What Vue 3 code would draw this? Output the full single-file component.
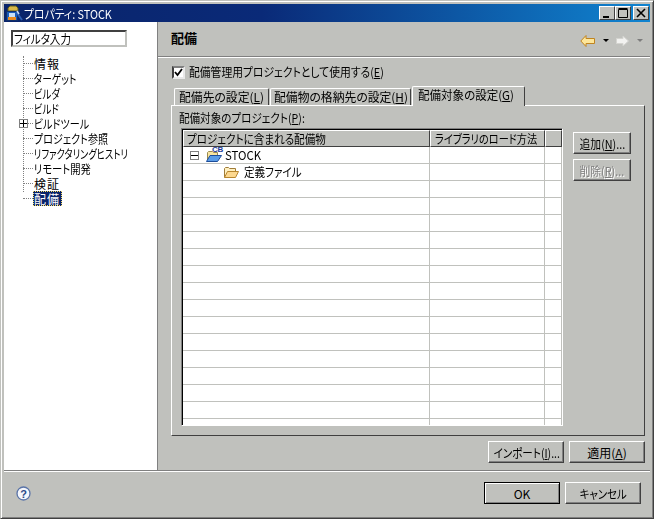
<script setup>
const navItems = [
  { label: '情報', cls: 'kanji' },
  { label: 'ターゲット', cls: 'kana', sx: 0.81 },
  { label: 'ビルダ', cls: 'kana', sx: 0.79 },
  { label: 'ビルド', cls: 'kana', sx: 0.79 },
  { label: 'ビルドツール', cls: 'kana', sx: 0.84, plus: true },
  { label: 'プロジェクト参照', cls: 'kana', sx: 0.84 },
  { label: 'リファクタリングヒストリ', cls: 'kana', sx: 0.77 },
  { label: 'リモート開発', cls: 'kana', sx: 0.86 },
  { label: '検証', cls: 'kanji' },
  { label: '配備', cls: 'kanji', selected: true }
]
const tabs = [
  { label: '配備先の設定(', key: 'L' },
  { label: '配備物の格納先の設定(', key: 'H' },
  { label: '配備対象の設定(', key: 'G', active: true }
]
const emptyRows = Array.from({ length: 15 }, (_, i) => i)
</script>

<template>
  <div class="window">
    <div class="titlebar">
      <svg class="app-icon" width="18" height="17" viewBox="0 0 18 17">
        <path d="M3 6V3l2-2h6l2 2v3z" fill="#d8b848" stroke="#5c5a20" />
        <rect x="1.500" y="6.500" width="11" height="9" fill="#1c5cb8" stroke="#10306c" />
        <rect x="4" y="8" width="6" height="4" fill="#c8e0f8" />
        <rect x="3" y="12" width="8" height="3" fill="#e88a20" />
        <path d="M12 8l5 7" stroke="#2c5cb0" stroke-width="2" />
        <path d="M12 6l2 3" stroke="#c8d8f0" stroke-width="1.500" />
      </svg>
      <span class="title-text">プロパティ: STOCK</span>
      <div class="win-buttons">
        <button class="win-btn"><svg width="10" height="10" viewBox="0 0 10 10"><rect x="1" y="8" width="6" height="2" fill="#000" /></svg></button>
        <button class="win-btn"><svg width="10" height="10" viewBox="0 0 10 10"><path d="M0.500 1.500h9v8h-9zM0.500 0.500h9" fill="none" stroke="#000" /></svg></button>
        <button class="win-btn close"><svg width="10" height="10" viewBox="0 0 10 10"><path d="M1 1l8 8M9 1l-8 8" stroke="#000" stroke-width="1.600" /></svg></button>
      </div>
    </div>

    <div class="main">
      <aside class="sidebar">
        <div class="filter"><span class="sx sx88">フィルタ入力</span></div>
        <ul class="tree">
          <li v-for="item in navItems" :key="item.label" class="tree-row">
            <span class="stub"></span>
            <span v-if="item.plus" class="plus"><svg width="7" height="7" viewBox="0 0 7 7"><path d="M0 3.500h7M3.500 0v7" stroke="#000" /></svg></span>
            <span class="tree-label" :class="[item.cls, { selected: item.selected }]" :style="item.sx ? { transform: `scaleX(${item.sx})` } : null">{{ item.label }}</span>
          </li>
        </ul>
      </aside>

      <section class="content">
        <header class="page-head">
          <h1>配備</h1>
          <div class="nav-arrows">
            <svg width="15" height="12" viewBox="0 0 15 12"><path d="M6 .500L.800 6 6 11.500V8.500h8.500v-5H6z" fill="#fde69a" stroke="#c08420" /></svg>
            <svg class="drop" width="6" height="3" viewBox="0 0 6 3"><path d="M0 0h6L3 3z" fill="#000" /></svg>
            <svg class="fwd" width="13" height="12" viewBox="0 0 13 12"><path d="M7 1l5.500 5L7 11V8.500H.500v-5H7z" fill="#f2f2f0" stroke="#d4d4d0" /></svg>
            <svg class="drop2" width="6" height="3" viewBox="0 0 6 3"><path d="M0 0h6L3 3z" fill="#7c7c7c" /></svg>
          </div>
        </header>

        <div class="body">
          <label class="check-row">
            <span class="checkbox"><svg width="9" height="9" viewBox="0 0 9 9"><path d="M1 4l2.500 3L8 1" fill="none" stroke="#000" stroke-width="1.800" /></svg></span>
            <span class="check-text sx sx90">配備管理用プロジェクトとして使用する(<u>E</u>)</span>
          </label>

          <div class="tabs">
            <div v-for="t in tabs" :key="t.key" class="tab" :class="{ active: t.active }"><span class="sx" :class="t.active ? 'sx96' : 'sx98'">{{ t.label }}<u>{{ t.key }}</u>)</span></div>
          </div>

          <div class="panel">
            <div class="panel-label"><span class="sx sx88">配備対象のプロジェクト(<u>P</u>):</span></div>
            <div class="panel-row">
              <div class="table">
                <div class="thead">
                  <div class="th c1"><span class="sx sx88">プロジェクトに含まれる配備物</span></div>
                  <div class="th c2"><span class="sx sx85">ライブラリのロード方法</span></div>
                  <div class="th c3"></div>
                </div>
                <div class="tr">
                  <div class="td c1 first">
                    <span class="minus"><svg width="7" height="7" viewBox="0 0 7 7"><path d="M0 3.500h7" stroke="#000" /></svg></span>
                    <span class="project-icon">
                      <svg width="16" height="12" viewBox="0 0 16 12"><path d="M1.500 10V2.500l1-1h4l1 1h4v3" fill="#f8e4a0" stroke="#9a8a50" /><path d="M.500 11.500l3.500-6h11.500l-4 6z" fill="#5a9ce8" stroke="#1c4c98" /></svg>
                      <span class="cb">CB</span>
                    </span>
                    <span class="row-text stock sx sx95">STOCK</span>
                  </div>
                  <div class="td c2"></div><div class="td c3"></div>
                </div>
                <div class="tr">
                  <div class="td c1 second">
                    <svg width="15" height="11" viewBox="0 0 15 11"><path d="M.500 10.500V1.500l1-1h3l1 1h6v3" fill="#fff0c0" stroke="#a07c38" /><path d="M.500 10.500l3-6h11l-3 6z" fill="#fcd890" stroke="#b8862e" /></svg>
                    <span class="row-text def sx sx88">定義ファイル</span>
                  </div>
                  <div class="td c2"></div><div class="td c3"></div>
                </div>
                <div v-for="r in emptyRows" :key="r" class="tr">
                  <div class="td c1"></div><div class="td c2"></div><div class="td c3"></div>
                </div>
              </div>
              <div class="side-buttons">
                <button class="btn small"><span class="sx sxc sx90">追加(<u>N</u>)...</span></button>
                <button class="btn small disabled"><span class="sx sxc sx90">削除(<u>R</u>)...</span></button>
              </div>
            </div>
          </div>

          <div class="action-row">
            <button class="btn import"><span class="sx sxc sx88">インポート(<u>I</u>)...</span></button>
            <button class="btn apply">適用(<u>A</u>)</button>
          </div>
        </div>
      </section>
    </div>

    <footer class="footer">
      <svg class="help" width="15" height="15" viewBox="0 0 15 15">
        <circle cx="7.500" cy="7.500" r="6.500" fill="#f4f6fc" stroke="#5a74a8" stroke-width="1.300" />
        <text x="7.500" y="11.500" text-anchor="middle" font-size="11" font-weight="700" font-family="Liberation Sans, sans-serif" fill="#2a4a88">?</text>
      </svg>
      <div class="footer-buttons">
        <button class="btn ok">OK</button>
        <button class="btn cancel"><span class="sx sxc sx87">キャンセル</span></button>
      </div>
    </footer>
  </div>
</template>

<style scoped>
.window {
  width: 654px;
  height: 519px;
  box-sizing: border-box;
  display: flex;
  flex-direction: column;
  background: #c0c1bd;
  border-top: 1px solid #c0c1bd;
  border-left: 1px solid #c0c1bd;
  border-right: 1px solid #404040;
  border-bottom: 1px solid #404040;
  padding: 3px 3px 0 3px;
  box-shadow: inset 1px 1px 0 #fff, inset -1px -1px 0 #808080;
  font-family: "Noto Sans CJK JP", "Liberation Sans", sans-serif;
  font-size: 12px;
  font-feature-settings: "palt";
  color: #000;
  overflow: hidden;
}
u { text-underline-offset: 1px; }
.sx { display: inline-block; transform-origin: left center; white-space: nowrap; }
.sxc { transform-origin: center center; }
.sx85 { transform: scaleX(0.85); }
.sx87 { transform: scaleX(0.87); }
.sx88 { transform: scaleX(0.88); }
.sx90 { transform: scaleX(0.9); }
.sx95 { transform: scaleX(0.95); }
.sx96 { transform: scaleX(0.96); }
.sx98 { transform: scaleX(0.985); }
.titlebar {
  height: 18px;
  flex: none;
  display: flex;
  align-items: center;
  background: linear-gradient(90deg, #0a246a 0%, #0a2a78 40%, #1084d0 100%);
  color: #fff;
}
.app-icon { margin-left: 1px; flex: none; }
.title-text { margin-left: 1px; font-size: 12px; transform: scaleX(0.9); transform-origin: left center; }
.win-buttons { margin-left: auto; display: flex; margin-right: 1px; }
.win-btn {
  width: 16px;
  height: 14px;
  padding: 0;
  display: flex;
  align-items: center;
  justify-content: center;
  background: #c0c1bd;
  border: 1px solid;
  border-color: #fff #404040 #404040 #fff;
}
.win-btn.close { margin-left: 2px; }
.main { flex: 1; min-height: 0; display: flex; }
.sidebar {
  flex: none;
  background: #fff;
  border-right: 1px solid #808080;
  padding: 8px 0 0 7px;
  width: 146px;
}
.filter {
  width: 111px;
  height: 13px;
  line-height: 13px;
  border: 2px solid;
  border-color: #404040 #c0c1bd #c0c1bd #404040;
  padding-left: 1px;
  font-size: 12px;
  white-space: nowrap;
  overflow: hidden;
}
.tree {
  list-style: none;
  margin: 9px 0 0;
  padding: 0;
  position: relative;
}
.tree::before {
  content: "";
  position: absolute;
  left: 12px;
  top: 0;
  height: 136px;
  border-left: 1px dotted #808080;
}
.tree-row {
  height: 15px;
  display: flex;
  align-items: center;
  position: relative;
  padding-left: 12px;
  white-space: nowrap;
}
.stub { width: 10px; border-top: 1px dotted #808080; flex: none; }
.plus {
  position: absolute;
  left: 8px;
  top: 3px;
  width: 7px;
  height: 7px;
  background: #fff;
  border: 1px solid #808080;
  display: flex;
}
.tree-label { padding: 0 1px; line-height: 15px; font-size: 12px; transform-origin: left center; }
.tree-label.kanji { letter-spacing: 1px; }
.tree-label.selected {
  background: #0a246a;
  color: #fff;
  outline: 1px dotted #ffe060;
  outline-offset: -1px;
  padding: 0 2px 0 1px;
}
.content { flex: 1; min-width: 0; display: flex; flex-direction: column; }
.page-head {
  height: 35px;
  flex: none;
  box-sizing: border-box;
  display: flex;
  align-items: center;
  padding: 0 7px 4px 13px;
  border-bottom: 1px solid #808080;
  box-shadow: 0 1px 0 #fff;
}
.page-head h1 { margin: 0; font-size: 13px; font-weight: 700; }
.nav-arrows { margin-left: auto; display: flex; align-items: center; margin-top: 7px; }
.drop { margin-left: 8px; }
.fwd { margin-left: 7px; }
.drop2 { margin-left: 8px; }
.body { padding: 7px 5px 0 13px; flex: 1; display: flex; flex-direction: column; }
.check-row { display: flex; align-items: center; height: 16px; margin-left: 1px; }
.checkbox {
  width: 9px;
  height: 9px;
  border: 2px solid;
  border-color: #808080 #e8e8e8 #e8e8e8 #404040;
  background: #fff;
  display: flex;
  flex: none;
}
.check-text { margin-left: 4px; line-height: 16px; }
.tabs { display: flex; align-items: flex-end; height: 21px; margin-top: 4px; padding-left: 3px; position: relative; z-index: 1; }
.tab {
  height: 16px;
  line-height: 16px;
  padding: 0 3px;
  border: 1px solid;
  border-color: #fff #404040 transparent #fff;
  border-bottom: 0;
  border-radius: 2px 2px 0 0;
  margin-right: 1px;
  white-space: nowrap;
  font-size: 12px;
}
.tab:nth-child(1) { width: 86px; padding-left: 4px; }
.tab:nth-child(2) { width: 133px; }
.tab.active {
  height: 19px;
  width: 103px;
  margin-bottom: -1px;
  background: #c0c1bd;
  padding-left: 5px;
}
.panel {
  height: 331px;
  box-sizing: border-box;
  border: 1px solid;
  border-color: #fff #404040 #404040 #fff;
  padding: 3px 8px 0 7px;
}
.panel-label { height: 19px; line-height: 18px; }
.panel-row { display: flex; padding-left: 2px; }
.table {
  width: 382px;
  height: 298px;
  flex: none;
  box-sizing: border-box;
  border: 1px solid;
  border-color: #808080 #fff #fff #808080;
  background: #fff;
  overflow: hidden;
  box-shadow: inset 1px 1px 0 #000;
  padding: 1px 0 0 1px;
}
.thead { display: flex; height: 17px; background: #c0c1bd; }
.th {
  box-sizing: border-box;
  height: 17px;
  line-height: 15px;
  padding-left: 3px;
  border: 1px solid;
  border-color: #fff #404040 #404040 #fff;
  white-space: nowrap;
  overflow: hidden;
  font-size: 12px;
}
.th.c2 { padding-left: 4px; }
.c1 { width: 247px; flex: none; }
.c2 { width: 115px; flex: none; }
.c3 { flex: 1; }
.tr { display: flex; height: 17px; box-sizing: border-box; border-bottom: 1px solid #c0c1bd; }
.td { box-sizing: border-box; height: 16px; border-right: 1px solid #c0c1bd; display: flex; align-items: center; }
.td.first { padding-left: 7px; }
.td.second { padding-left: 41px; }
.minus {
  width: 7px;
  height: 7px;
  border: 1px solid #808080;
  display: flex;
  flex: none;
}
.project-icon { position: relative; width: 16px; height: 12px; margin-left: 7px; display: flex; margin-top: 1px; }
.cb { position: absolute; right: -1px; top: -4px; font-size: 8px; font-weight: 700; line-height: 8px; color: #1c3c9a; font-family: "Liberation Sans", sans-serif; letter-spacing: -0.3px; }
.row-text { line-height: 16px; }
.stock { margin-left: 3px; }
.def { margin-left: 5px; }
.side-buttons { margin-left: 10px; display: flex; flex-direction: column; gap: 5px; margin-top: 4px; }
.btn {
  font: inherit;
  font-size: 12px;
  color: #000;
  background: #c0c1bd;
  height: 22px;
  padding: 0;
  border: 1px solid;
  border-color: #fff #404040 #404040 #fff;
  box-shadow: inset -1px -1px 0 #808080;
  white-space: nowrap;
}
.btn.small { width: 58px; }
.btn.disabled { color: #808080; text-shadow: 1px 1px 0 #fff; }
.action-row { display: flex; justify-content: flex-end; gap: 5px; margin-top: 5px; }
.btn.import { width: 76px; }
.btn.apply { width: 76px; }
.footer {
  height: 48px;
  flex: none;
  box-sizing: border-box;
  border-top: 1px solid #808080;
  box-shadow: inset 0 1px 0 #fff;
  display: flex;
  align-items: flex-start;
  padding: 11px 9px 0 12px;
}
.help { margin-top: 4px; }
.footer-buttons { margin-left: auto; display: flex; gap: 5px; }
.btn.ok { width: 76px; border: 1px solid #000; box-shadow: inset 1px 1px 0 #fff, inset -1px -1px 0 #808080; }
.btn.cancel { width: 76px; }
</style>

<style>
html, body { margin: 0; padding: 0; background: #c0c1bd; }
</style>
